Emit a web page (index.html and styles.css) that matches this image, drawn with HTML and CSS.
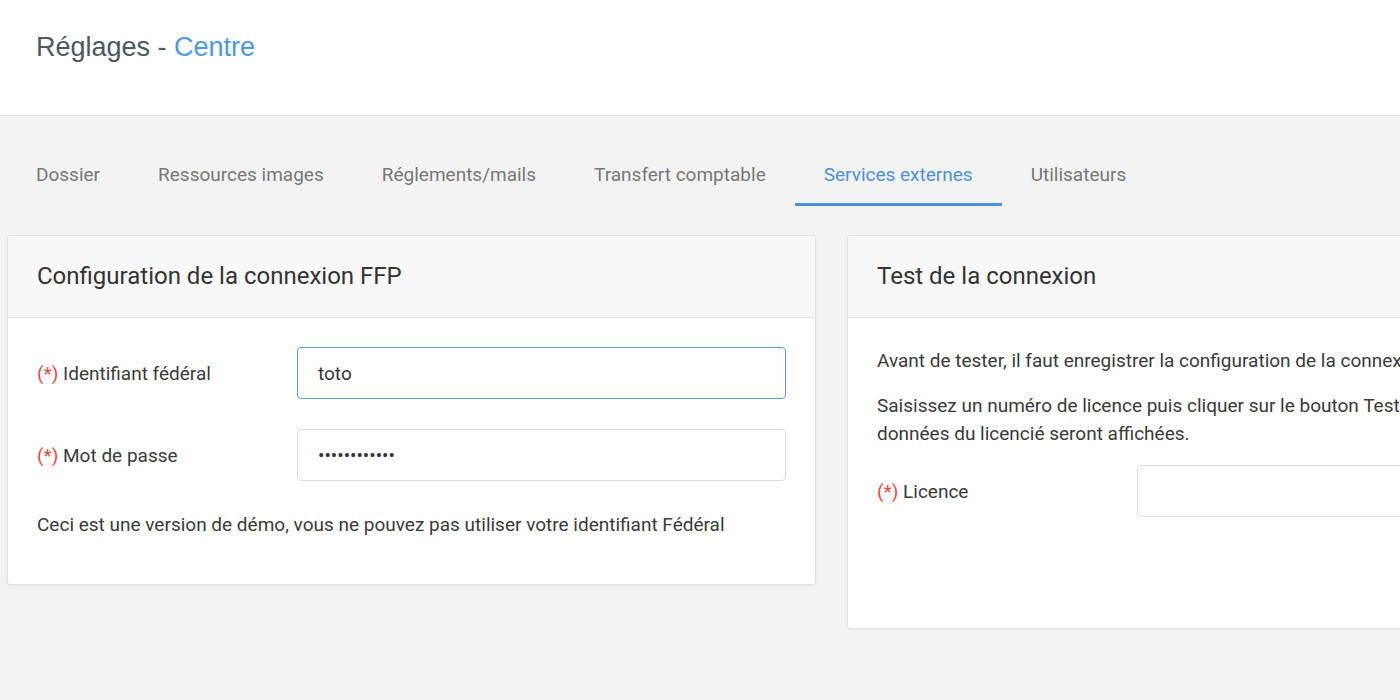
FILE: index.html
```html
<!DOCTYPE html>
<html lang="fr">
<head>
<meta charset="utf-8">
<title>Réglages - Centre</title>
<link rel="stylesheet" href="styles.css">
</head>
<body>
<header class="page-header">
  <h1 class="page-title">Réglages - <span class="page-title__accent">Centre</span></h1>
</header>

<nav class="tabs">
  <a class="tab">Dossier</a>
  <a class="tab">Ressources images</a>
  <a class="tab">Réglements/mails</a>
  <a class="tab">Transfert comptable</a>
  <a class="tab tab--active">Services externes</a>
  <a class="tab">Utilisateurs</a>
</nav>

<main class="panels">
  <section class="panel">
    <div class="panel-header">
      <h2 class="panel-title">Configuration de la connexion FFP</h2>
    </div>
    <div class="panel-body">
      <div class="form-row">
        <label class="form-label"><span class="required">(*)</span> Identifiant fédéral</label>
        <input class="form-input form-input--focus" type="text" value="toto">
      </div>
      <div class="form-row">
        <label class="form-label"><span class="required">(*)</span> Mot de passe</label>
        <input class="form-input" type="password" value="demodemodemo">
      </div>
      <p class="note">Ceci est une version de démo, vous ne pouvez pas utiliser votre identifiant Fédéral</p>
    </div>
  </section>

  <section class="panel">
    <div class="panel-header">
      <h2 class="panel-title">Test de la connexion</h2>
    </div>
    <div class="panel-body panel-body--test">
      <p class="text">Avant de tester, il faut enregistrer la configuration de la connexion.</p>
      <p class="text">Saisissez un numéro de licence puis cliquer sur le bouton Tester, les<br>données du licencié seront affichées.</p>
      <div class="form-row">
        <label class="form-label"><span class="required">(*)</span> Licence</label>
        <input class="form-input" type="text" value="">
      </div>
    </div>
  </section>
</main>
</body>
</html>
```

FILE: styles.css
```css
* { box-sizing: border-box; }

html, body {
  margin: 0;
  padding: 0;
}

body {
  width: 1400px;
  height: 700px;
  overflow: hidden;
  background: #f3f3f3;
  font-family: Roboto, "Noto Sans", sans-serif;
  color: #3a3a3a;
}

.page-header {
  height: 116px;
  background: #ffffff;
  border-bottom: 1px solid #dedede;
  padding: 32px 36px 0;
}

.page-title {
  margin: 0;
  font-family: "Liberation Sans", Arial, sans-serif;
  font-weight: normal;
  font-size: 27px;
  color: #4b5862;
}

.page-title__accent {
  color: #4a9ae8;
}

.tabs {
  display: flex;
  padding: 47px 7px 0;
}

.tab {
  display: block;
  padding: 0 29px 16px;
  font-size: 19px;
  line-height: 24px;
  color: #777777;
  border-bottom: 3px solid transparent;
  white-space: nowrap;
}

.tab--active {
  color: #4a90e2;
  border-bottom-color: #4a90e2;
}

.panels {
  display: grid;
  grid-template-columns: 809px 809px;
  gap: 31px;
  align-items: start;
  padding: 29px 7px 0;
}

.panel {
  background: #ffffff;
  border: 1px solid #e0e0e0;
  border-radius: 3px;
  box-shadow: 0 1px 2px rgba(0, 0, 0, 0.05);
}

.panel-header {
  background: #f8f8f8;
  border-bottom: 1px solid #e0e0e0;
  padding: 25px 29px 26px;
}

.panel-title {
  margin: 0;
  font-weight: normal;
  font-size: 24px;
  line-height: 30px;
  color: #333333;
}

.panel-body {
  padding: 29px 29px 30px;
}

.panel-body--test {
  min-height: 310px;
}

.form-row {
  display: grid;
  grid-template-columns: 260px 1fr;
  align-items: center;
  margin-bottom: 30px;
}

.form-label {
  font-size: 19px;
  color: #3a3a3a;
}

.required {
  color: #e8493e;
}

.form-input {
  height: 52px;
  width: 100%;
  padding: 0 20px;
  border: 1px solid #dcdcdc;
  border-radius: 4px;
  background: #ffffff;
  font-family: Roboto, "Noto Sans", sans-serif;
  font-size: 19px;
  color: #333333;
  outline: none;
}

.form-input--focus {
  border: 1.5px solid #5a9ee8;
}

.note {
  margin: 0 0 15px;
  font-size: 19px;
  line-height: 28px;
  color: #3a3a3a;
}

.text {
  margin: 0 0 17px;
  font-size: 19px;
  line-height: 28px;
  color: #3a3a3a;
  white-space: nowrap;
}
```
